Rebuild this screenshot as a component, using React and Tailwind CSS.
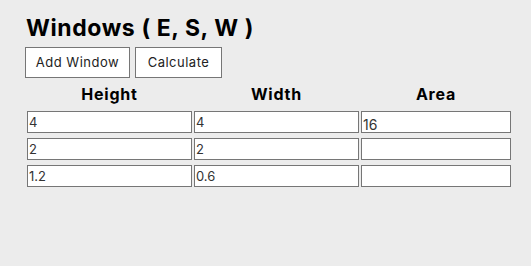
export default function App() {
  const rows = [
    { h: '4', w: '4', area: '16' },
    { h: '2', w: '2', area: '' },
    { h: '1.2', w: '0.6', area: '' }
  ];

  return (
    <div className="w-[531px] h-[266px] bg-[#ececec] text-black" style={{ fontFamily: 'Inter, "Noto Sans", sans-serif' }}>
      <div className="pl-[25px] pt-[13px]">
        <h1 className="text-[23px] leading-[30px] font-bold pl-[1px] tracking-[0.6px]">Windows ( E, S, W )</h1>

        {/* Controls */}
        <div className="flex gap-[5px] mt-[4px]">
          <button className="h-[31px] w-[105px] bg-white border border-[#767676] text-[13px] tracking-[0.5px] text-[#222]">
            Add Window
          </button>
          <button className="h-[31px] w-[87px] bg-white border border-[#767676] text-[13px] tracking-[0.5px] text-[#222]">
            Calculate
          </button>
        </div>

        {/* Table */}
        <div className="grid grid-cols-[165px_165px_150px] gap-x-[2px] gap-y-[5px] pl-[2px] mt-[6px]">
          <div className="text-center text-[16px] font-bold leading-[20px] tracking-[0.8px] mb-[2px]">Height</div>
          <div className="text-center text-[16px] font-bold leading-[20px] tracking-[0.8px] mb-[2px]">Width</div>
          <div className="text-center text-[16px] font-bold leading-[20px] tracking-[0.8px] mb-[2px]">Area</div>
          {rows.map((r, i) => (
            <div key={i} className="contents">
              <input readOnly value={r.h} className="h-[22px] bg-white border border-[#767676] px-[1px] text-[13px] text-[#333] outline-none" />
              <input readOnly value={r.w} className="h-[22px] bg-white border border-[#767676] px-[1px] text-[13px] text-[#333] outline-none" />
              <div className="h-[22px] bg-white border border-[#767676] pl-[1px] pt-[4px] text-[14px] leading-[18px] text-[#333]">{r.area}</div>
            </div>
          ))}
        </div>
      </div>
    </div>
  );
}
